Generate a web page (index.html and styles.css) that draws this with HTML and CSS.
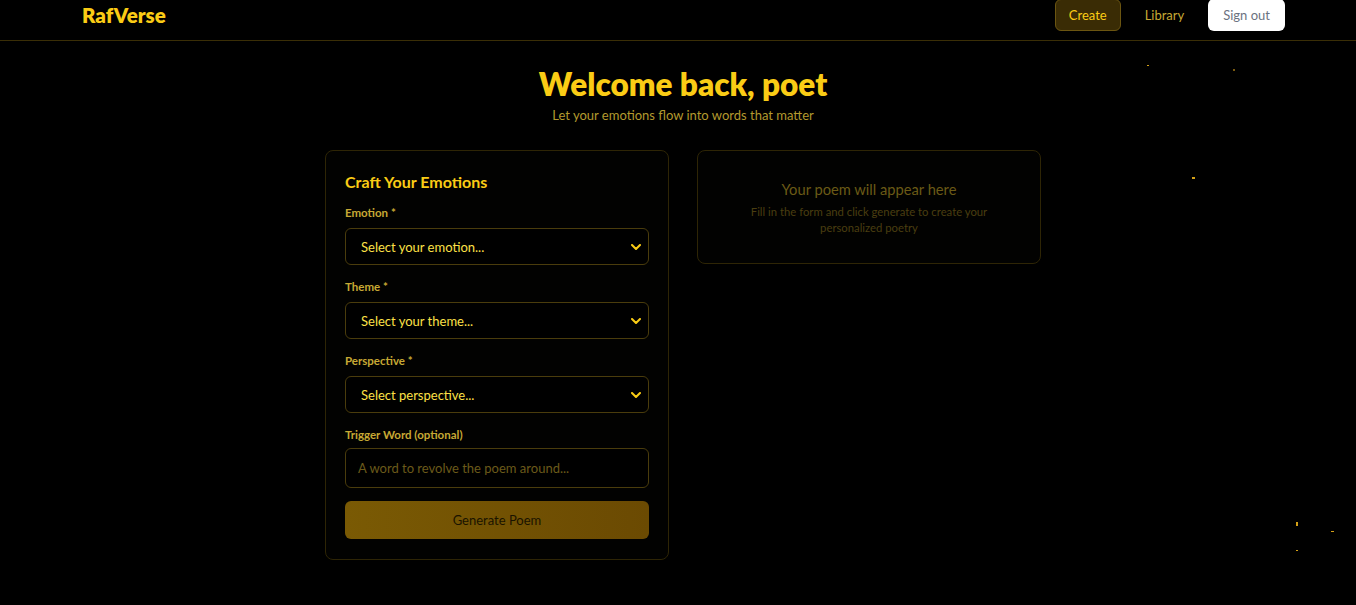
FILE: index.html
```html
<!DOCTYPE html>
<html lang="en">
<head>
<meta charset="utf-8">
<title>RafVerse</title>
<link rel="stylesheet" href="styles.css">
</head>
<body>
<div class="sparks">
  <span class="spark s1"></span>
  <span class="spark s2"></span>
  <span class="spark s3"></span>
  <span class="spark s4"></span>
  <span class="spark s5"></span>
  <span class="spark s6"></span>
</div>
<header class="nav">
  <div class="logo">RafVerse</div>
  <nav class="nav-links">
    <a class="nav-btn active">Create</a>
    <a class="nav-btn">Library</a>
    <a class="nav-btn signout">Sign out</a>
  </nav>
</header>
<main class="main">
  <section class="hero">
    <h1>Welcome back, poet</h1>
    <p>Let your emotions flow into words that matter</p>
  </section>
  <div class="columns">
    <form class="card form-card">
      <h2>Craft Your Emotions</h2>
      <div class="field">
        <label>Emotion *</label>
        <div class="select-wrap">
          <select><option>Select your emotion...</option></select>
          <svg class="chev" viewBox="0 0 10 6" width="10" height="6"><path d="M1 1l4 4 4-4" fill="none" stroke="currentColor" stroke-width="2" stroke-linecap="round" stroke-linejoin="round"/></svg>
        </div>
      </div>
      <div class="field">
        <label>Theme *</label>
        <div class="select-wrap">
          <select><option>Select your theme...</option></select>
          <svg class="chev" viewBox="0 0 10 6" width="10" height="6"><path d="M1 1l4 4 4-4" fill="none" stroke="currentColor" stroke-width="2" stroke-linecap="round" stroke-linejoin="round"/></svg>
        </div>
      </div>
      <div class="field">
        <label>Perspective *</label>
        <div class="select-wrap">
          <select><option>Select perspective...</option></select>
          <svg class="chev" viewBox="0 0 10 6" width="10" height="6"><path d="M1 1l4 4 4-4" fill="none" stroke="currentColor" stroke-width="2" stroke-linecap="round" stroke-linejoin="round"/></svg>
        </div>
      </div>
      <div class="field last">
        <label>Trigger Word (optional)</label>
        <input type="text" placeholder="A word to revolve the poem around...">
      </div>
      <button type="button" class="generate">Generate Poem</button>
    </form>
    <section class="card output-card">
      <h3>Your poem will appear here</h3>
      <p>Fill in the form and click generate to create your personalized poetry</p>
    </section>
  </div>
</main>
</body>
</html>
```
FILE: styles.css
```css
* { box-sizing: border-box; }
html, body { margin: 0; padding: 0; }
body {
  background: #000;
  color: #facc15;
  font-family: Lato, "Noto Sans", sans-serif;
  min-height: 605px;
  position: relative;
  overflow: hidden;
}
.nav {
  height: 41px;
  border-bottom: 1px solid #3a2e06;
  display: flex;
  justify-content: space-between;
  align-items: flex-start;
  padding: 0 71px 0 82px;
}
.logo {
  font-weight: 800;
  font-size: 20.5px;
  line-height: 31px;
  color: #facc15;
}
.nav-links { display: flex; gap: 10px; align-items: flex-start; }
.nav-btn {
  display: block;
  height: 32px;
  line-height: 30px;
  padding: 0 13px;
  font-size: 13px;
  color: #c7a934;
  border: 1px solid transparent;
  border-radius: 6px;
  margin-top: -1px;
}
.nav-btn.active {
  background: #3a2c05;
  border-color: #6b5511;
  color: #facc15;
  padding: 0 13px;
}
.nav-btn.signout {
  background: #fff;
  color: #6b7280;
  padding: 0 14px;
}
.main { padding-left: 10px; }
.hero { text-align: center; padding-top: 24px; }
.hero h1 {
  margin: 0;
  font-size: 31.5px;
  line-height: 38px;
  font-weight: 800;
  color: #facc15;
}
.hero p {
  margin: 3px 0 0;
  font-size: 13px;
  line-height: 18px;
  color: #b39a2e;
}
.columns {
  display: flex;
  justify-content: center;
  align-items: flex-start;
  gap: 28px;
  margin-top: 26px;
}
.card {
  width: 344px;
  border: 1px solid #2e2505;
  border-radius: 8px;
  background: #020201;
}
.form-card { padding: 20px 19px 20px 19px; margin: 0; }
.form-card h2 {
  margin: 0 0 12px;
  font-size: 16px;
  line-height: 22px;
  font-weight: 700;
  color: #facc15;
}
.field { margin-bottom: 14px; }
.field.last { margin-bottom: 14px; }
.field label {
  display: block;
  font-size: 11.5px;
  line-height: 16px;
  font-weight: 700;
  color: #c7a934;
  margin-bottom: 7px;
}
.select-wrap { position: relative; }
select, input {
  display: block;
  width: 100%;
  height: 37px;
  background: #000;
  border: 1px solid #4a3c0c;
  border-radius: 6px;
  color: #fde047;
  font-family: inherit;
  font-size: 13px;
  padding: 0 15px;
  appearance: none;
  -webkit-appearance: none;
  outline: none;
}
input { height: 40px; padding: 0 12px; font-size: 13px; }
.field.last label { margin-bottom: 5px; }
input::placeholder { color: #6b5a1a; }
.chev {
  position: absolute;
  right: 8px;
  top: 16px;
  color: #facc15;
}
.generate {
  display: block;
  width: 100%;
  height: 38px;
  margin-top: -1px;
  border: none;
  border-radius: 6px;
  background: linear-gradient(90deg, #7a5a04, #6b4a02);
  color: #1a1300;
  font-family: inherit;
  font-size: 13px;
}
.output-card {
  padding: 28px 20px 25px;
  text-align: center;
  height: 114px;
}
.output-card h3 {
  margin: 0 0 5px;
  font-size: 14.7px;
  line-height: 20px;
  font-weight: 400;
  color: #6b5a16;
}
.output-card p {
  margin: 0 auto;
  width: 250px;
  font-size: 11.3px;
  line-height: 16px;
  color: #4a3e10;
}
.sparks { position: absolute; inset: 0; pointer-events: none; }
.spark { position: absolute; width: 2px; height: 2px; background: #d4a017; }
.s1 { left: 1147px; top: 65px; height: 1px; }
.s2 { left: 1233px; top: 69px; background: #7a5a10; }
.s3 { left: 1192px; top: 177px; width: 3px; }
.s4 { left: 1296px; top: 522px; height: 4px; }
.s5 { left: 1331px; top: 531px; width: 3px; height: 1px; }
.s6 { left: 1296px; top: 550px; height: 1px; }
```
